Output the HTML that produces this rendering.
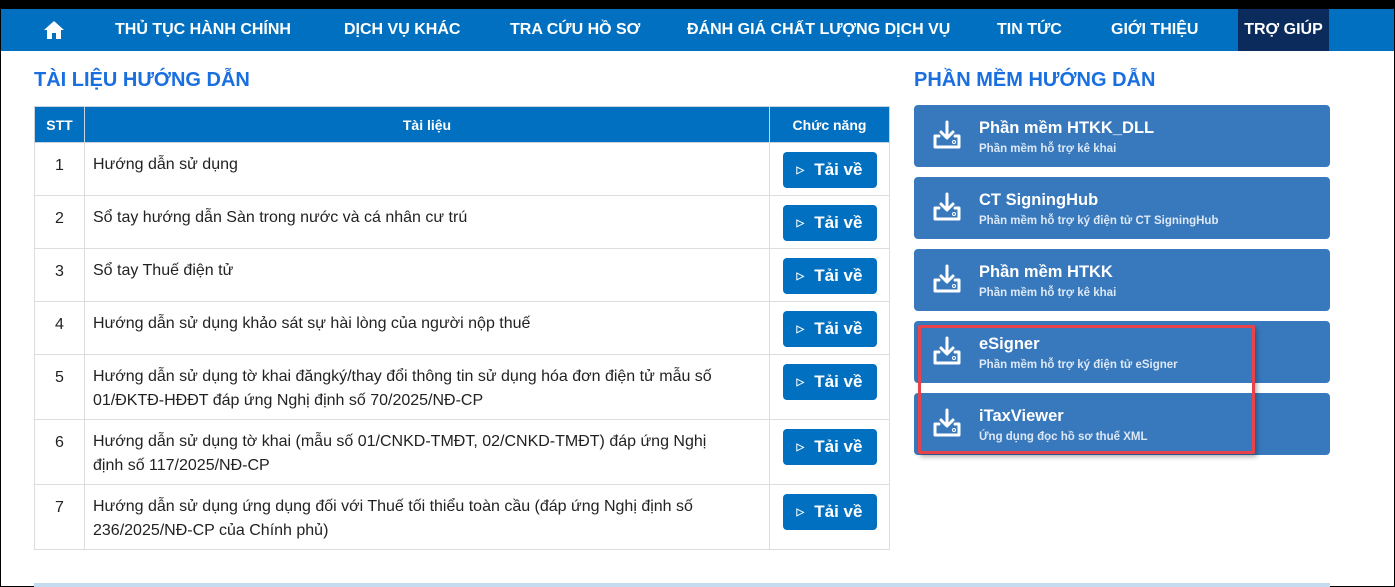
<!DOCTYPE html>
<html><head><meta charset="utf-8"><style>
*{box-sizing:border-box;margin:0;padding:0}
body{width:1395px;height:587px;background:#fff;font-family:"Liberation Sans",sans-serif;position:relative;overflow:hidden;border:1px solid #000;border-top:9px solid #000}
.nav{position:absolute;left:0;top:0;width:1393px;height:42px;background:#0270c0}
.nav span{position:absolute;top:0;height:42px;line-height:42px;color:#fff;font-weight:bold;font-size:16px}
.h{position:absolute;color:#1a6fe0;font-weight:bold;font-size:20px}
table{position:absolute;left:33px;top:97px;border-collapse:collapse;width:856px;font-size:16px;color:#222}
th{background:#0270c0;color:#fff;font-weight:bold;height:36px;font-size:14px;border:1px solid #c8d4e0}
td{border:1px solid #ddd;vertical-align:top;padding-top:14px}
td.n{text-align:center}
td.d{padding-left:8px;padding-right:20px;line-height:24px;padding-top:10px}
td.b{text-align:center;padding-top:9px}
.btn{display:inline-block;width:94px;height:36px;background:#0270c0;border-radius:4px;color:#fff;font-weight:bold;font-size:17px;line-height:36px}
.btn i{font-style:normal;font-size:10px;margin-right:10px;vertical-align:2px}
.card{position:absolute;left:913px;width:416px;height:62px;background:#3878bc;border-radius:4px;color:#fff}
.card svg{position:absolute;left:18px;top:15px}
.card b{position:absolute;left:65px;top:14px;font-size:16.5px}
.card small{position:absolute;left:65px;top:38px;font-size:11.5px;color:#dde8f5;font-weight:bold}
</style></head><body>
<div class="nav">
<svg style="position:absolute;left:42px;top:11px" width="22" height="20" viewBox="0 0 22 20"><path d="M11 1L1 10h3v9h5v-6h4v6h5v-9h3z" fill="#fff"/></svg>
<span style="left:114px">THỦ TỤC HÀNH CHÍNH</span>
<span style="left:343px">DỊCH VỤ KHÁC</span>
<span style="left:509px">TRA CỨU HỒ SƠ</span>
<span style="left:686px">ĐÁNH GIÁ CHẤT LƯỢNG DỊCH VỤ</span>
<span style="left:996px">TIN TỨC</span>
<span style="left:1110px">GIỚI THIỆU</span>
<span style="left:1237px;width:91px;background:#0a2b5c;text-align:center">TRỢ GIÚP</span>
</div>
<div class="h" style="left:33px;top:60px">TÀI LIỆU HƯỚNG DẪN</div>
<div class="h" style="left:913px;top:60px">PHẦN MỀM HƯỚNG DẪN</div>
<table>
<tr><th style="width:50px">STT</th><th>Tài liệu</th><th style="width:120px">Chức năng</th></tr>
<tr style="height:53px"><td class="n">1</td><td class="d">Hướng dẫn sử dụng</td><td class="b"><span class="btn"><i>▷</i>Tải về</span></td></tr>
<tr style="height:53px"><td class="n">2</td><td class="d">Sổ tay hướng dẫn Sàn trong nước và cá nhân cư trú</td><td class="b"><span class="btn"><i>▷</i>Tải về</span></td></tr>
<tr style="height:53px"><td class="n">3</td><td class="d">Sổ tay Thuế điện tử</td><td class="b"><span class="btn"><i>▷</i>Tải về</span></td></tr>
<tr style="height:53px"><td class="n">4</td><td class="d">Hướng dẫn sử dụng khảo sát sự hài lòng của người nộp thuế</td><td class="b"><span class="btn"><i>▷</i>Tải về</span></td></tr>
<tr style="height:65px"><td class="n">5</td><td class="d">Hướng dẫn sử dụng tờ khai đăngký/thay đổi thông tin sử dụng hóa đơn điện tử mẫu số<br>01/ĐKTĐ-HĐĐT đáp ứng Nghị định số 70/2025/NĐ-CP</td><td class="b"><span class="btn"><i>▷</i>Tải về</span></td></tr>
<tr style="height:65px"><td class="n">6</td><td class="d">Hướng dẫn sử dụng tờ khai (mẫu số 01/CNKD-TMĐT, 02/CNKD-TMĐT) đáp ứng Nghị<br>định số 117/2025/NĐ-CP</td><td class="b"><span class="btn"><i>▷</i>Tải về</span></td></tr>
<tr style="height:65px"><td class="n">7</td><td class="d">Hướng dẫn sử dụng ứng dụng đối với Thuế tối thiểu toàn cầu (đáp ứng Nghị định số<br>236/2025/NĐ-CP của Chính phủ)</td><td class="b"><span class="btn"><i>▷</i>Tải về</span></td></tr>
</table>
<div class="card" style="top:96px"><svg width="30" height="30" viewBox="0 0 30 30" fill="none" stroke="#fff" stroke-width="3" stroke-linecap="round" stroke-linejoin="round"><path d="M15 2v16M9 12l6 6 6-6M7 16H3v11h24V16h-4"/><circle cx="22" cy="22" r="0.5"/></svg><b>Phần mềm HTKK_DLL</b><small>Phần mềm hỗ trợ kê khai</small></div>
<div class="card" style="top:168px"><svg width="30" height="30" viewBox="0 0 30 30" fill="none" stroke="#fff" stroke-width="3" stroke-linecap="round" stroke-linejoin="round"><path d="M15 2v16M9 12l6 6 6-6M7 16H3v11h24V16h-4"/><circle cx="22" cy="22" r="0.5"/></svg><b>CT SigningHub</b><small>Phần mềm hỗ trợ ký điện tử CT SigningHub</small></div>
<div class="card" style="top:240px"><svg width="30" height="30" viewBox="0 0 30 30" fill="none" stroke="#fff" stroke-width="3" stroke-linecap="round" stroke-linejoin="round"><path d="M15 2v16M9 12l6 6 6-6M7 16H3v11h24V16h-4"/><circle cx="22" cy="22" r="0.5"/></svg><b>Phần mềm HTKK</b><small>Phần mềm hỗ trợ kê khai</small></div>
<div class="card" style="top:312px"><svg width="30" height="30" viewBox="0 0 30 30" fill="none" stroke="#fff" stroke-width="3" stroke-linecap="round" stroke-linejoin="round"><path d="M15 2v16M9 12l6 6 6-6M7 16H3v11h24V16h-4"/><circle cx="22" cy="22" r="0.5"/></svg><b>eSigner</b><small>Phần mềm hỗ trợ ký điện tử eSigner</small></div>
<div class="card" style="top:384px"><svg width="30" height="30" viewBox="0 0 30 30" fill="none" stroke="#fff" stroke-width="3" stroke-linecap="round" stroke-linejoin="round"><path d="M15 2v16M9 12l6 6 6-6M7 16H3v11h24V16h-4"/><circle cx="22" cy="22" r="0.5"/></svg><b>iTaxViewer</b><small>Ứng dụng đọc hồ sơ thuế XML</small></div>
<div style="position:absolute;left:917px;top:316px;width:337px;height:129px;border:3px solid #e8424a;border-radius:2px;box-shadow:2px 3px 5px rgba(0,0,0,.3)"></div>
<div style="position:absolute;left:33px;top:574px;width:1296px;height:4px;background:#c5dbef"></div>
</body></html>
